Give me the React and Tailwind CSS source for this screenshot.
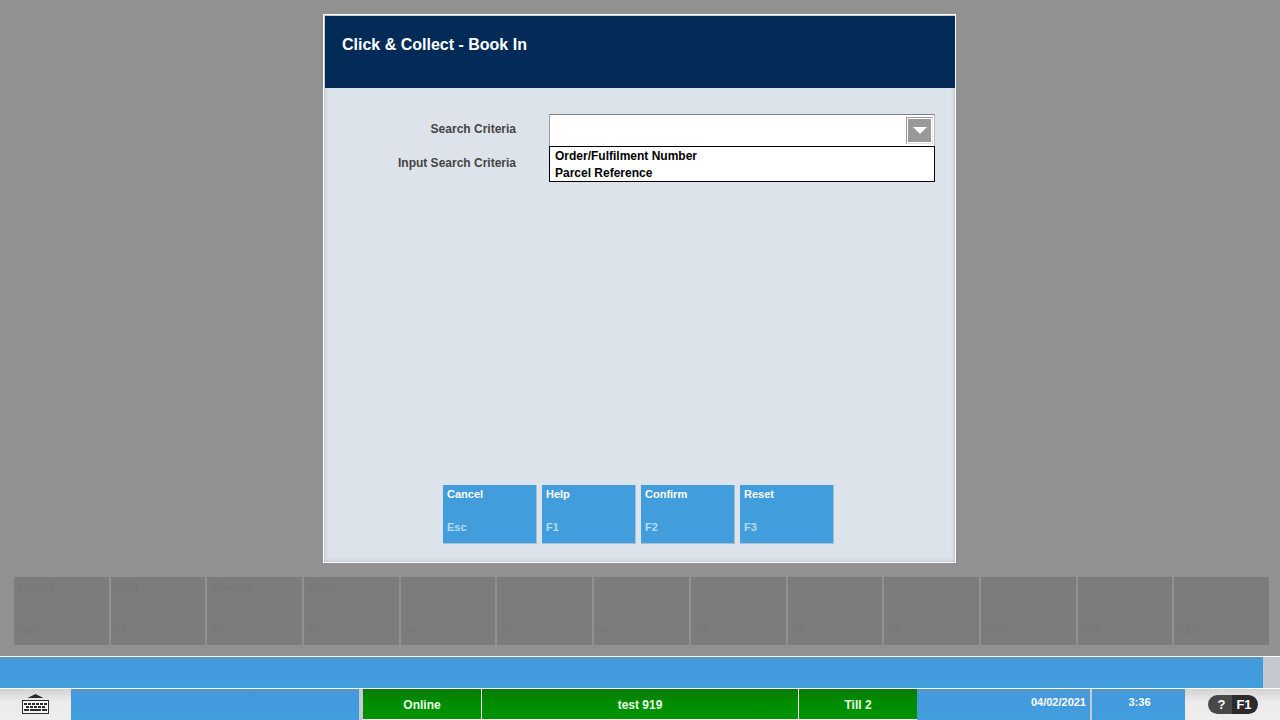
import React from "react";

const actions = [
  { name: "Cancel", hotkey: "Esc" },
  { name: "Help", hotkey: "F1" },
  { name: "Confirm", hotkey: "F2" },
  { name: "Reset", hotkey: "F3" },
];

const backgroundKeys = [
  ...actions,
  ...["F4", "F5", "F6", "F7", "F8", "F9", "F10", "F11", "F12"].map((hotkey) => ({ name: "", hotkey })),
];

const criteria = ["Order/Fulfilment Number", "Parcel Reference"];

function KeyboardIcon() {
  return (
    <svg width="27" height="20" viewBox="0 0 27 20" fill="#2b2b2b" aria-hidden="true">
      <path d="M5.5 4 L13.5 0 L21.5 4 Z" />
      <rect x="0.5" y="6.5" width="26" height="13" fill="#f6f6f6" stroke="#2b2b2b" />
      <path d="M2 9h3v2h-3z M6 9h3v2h-3z M10 9h3v2h-3z M14 9h3v2h-3z M18 9h3v2h-3z M22 9h3v2h-3z" />
      <path d="M4 12h3v2h-3z M8 12h3v2h-3z M12 12h3v2h-3z M16 12h3v2h-3z M20 12h3v2h-3z" />
      <path d="M2 15h5v2h-5z M8 15h11v2h-11z M20 15h5v2h-5z" />
    </svg>
  );
}

function SearchDialog() {
  return (
    <section
      role="dialog"
      aria-labelledby="dialog-title"
      className="mx-auto flex w-full max-w-[633px] flex-1 flex-col border border-white bg-[#dce3ea] shadow-[inset_0_0_4px_#aab2ba]"
    >
      <header className="ml-px mt-px h-[72px] bg-[#022b57] px-[17px] pt-[18px]">
        <h1 id="dialog-title" className="text-base leading-[22px] font-bold text-white">
          Click &amp; Collect - Book In
        </h1>
      </header>
      <form
        className="flex flex-1 flex-col justify-between pt-[26px] pb-[18px]"
        onSubmit={(e) => e.preventDefault()}
      >
        <div className="grid grid-cols-[192px_1fr] items-center gap-x-[33px] gap-y-px pr-[20px] text-xs font-bold">
          <label htmlFor="criteria" className="pb-[3px] text-right text-[#444444]">
            Search Criteria
          </label>
          <div className="relative">
            <select
              id="criteria"
              defaultValue=""
              className="block h-[33px] w-full appearance-none border border-t-[#808080] border-r-[#b8bcc0] border-b-white border-l-[#a0a0a0] bg-white px-[5px] text-black"
            >
              <option value=""></option>
              {criteria.map((c) => (
                <option key={c}>{c}</option>
              ))}
            </select>
            <span className="pointer-events-none absolute top-[3px] right-[2px] flex h-[27px] w-[27px] border border-t-[#999] border-r-[#e4e4e4] border-b-[#e4e4e4] border-l-[#999] bg-white p-px">
              <span className="flex flex-1 items-center justify-center bg-[#999999]">
                <svg width="14" height="7" viewBox="0 0 14 7" fill="#fff" aria-hidden="true">
                  <path d="M0 0h14L7 7z" />
                </svg>
              </span>
            </span>
            <ul
              role="listbox"
              aria-label="Search Criteria"
              className="absolute inset-x-0 top-[32px] z-10 h-9 border border-black bg-white px-[5px] pt-px text-black"
            >
              {criteria.map((c) => (
                <li key={c} role="option" aria-selected="false" className="leading-[17px]">
                  {c}
                </li>
              ))}
            </ul>
          </div>
          <label htmlFor="term" className="pb-[3px] text-right text-[#444444]">
            Input Search Criteria
          </label>
          <input id="term" type="text" className="h-[33px] w-full border border-[#a0a0a0] bg-white px-[5px]" />
        </div>
        <div className="flex justify-center gap-[5px] pr-[2px]">
          {actions.map((a) => (
            <button
              key={a.name}
              type="button"
              className="flex h-[59px] w-[94px] flex-col items-start gap-[17px] border-r border-b border-[#a3bfda] bg-[#419ddc] px-1 pt-px text-[11px] leading-4 font-bold text-white"
            >
              <span>{a.name}</span>
              <span className="text-[#b5dcf5]">{a.hotkey}</span>
            </button>
          ))}
        </div>
      </form>
    </section>
  );
}

function FunctionKeys() {
  return (
    <nav
      aria-label="Function keys"
      className="mt-[14px] mr-[11px] mb-[11px] ml-[14px] grid grid-cols-13 gap-[2px]"
    >
      {backgroundKeys.map((k) => (
        <button
          key={k.hotkey}
          type="button"
          disabled
          className="flex h-[68px] flex-col items-start justify-between bg-[#7c7c7c] px-1 pt-[2px] pb-[7px] text-[11px] leading-4 font-bold text-[#787878]"
        >
          <span>{k.name}</span>
          <span>{k.hotkey}</span>
        </button>
      ))}
    </nav>
  );
}

function StatusBar() {
  const green =
    "flex items-center justify-center border-b border-white bg-linear-to-b from-[#087a08] via-[#018b01] via-40% to-[#019301] pt-[2px] text-[#e6ffe6]";
  const blue = "bg-linear-to-b from-[#5099c9] via-[#4399de] via-20% to-[#419ddc]";
  return (
    <footer className="flex h-8 border-t border-white bg-[#c6cad2] text-xs font-bold text-white">
      <button
        type="button"
        aria-label="On-screen keyboard"
        className="flex w-[71px] items-center justify-center bg-linear-to-b from-[#d2d2d2] via-[#ebebeb] via-40% to-[#eeeeee] pb-px"
      >
        <KeyboardIcon />
      </button>
      <div className={blue + " mr-1 flex-[288]"} />
      <div className={green + " w-[118px]"}>Online</div>
      <div className={green + " ml-px flex-[316] shadow-[-1px_0_#fff,1px_0_#fff]"}>test 919</div>
      <div className={green + " ml-px w-[118px]"}>Till 2</div>
      <div className={blue + " w-[173px] pt-[5px] pr-1 text-right text-[11px] leading-4"}>04/02/2021</div>
      <div className={blue + " ml-[2px] w-[93px] pt-[5px] pl-[2px] text-center text-[11px] leading-4"}>3:36</div>
      <div className="flex w-[95px] items-center justify-center bg-linear-to-b from-[#d2d2d2] via-[#ebebeb] via-40% to-[#eeeeee]">
        <button
          type="button"
          className="flex h-[19px] w-[50px] overflow-hidden rounded-full text-[13px] leading-5"
        >
          <span className="flex-1 bg-[#484848] pl-1">?</span>
          <span className="w-[26px] bg-[#2b2b2b] pr-px">F1</span>
        </button>
      </div>
    </footer>
  );
}

export default function App() {
  return (
    <div className="flex min-h-screen flex-col bg-[#919191] font-['Liberation_Sans',Arial,sans-serif]">
      <main className="flex flex-1 flex-col pt-[14px]">
        <div className="flex flex-1 pr-px">
          <SearchDialog />
        </div>
        <FunctionKeys />
      </main>
      <div role="status" className="flex h-8 border-t border-white bg-[#c4c8ce]">
        <div className="flex-1 bg-linear-to-b from-[#5099c9] via-[#4399de] via-20% to-[#419ddc]" />
        <div className="w-[17px]" />
      </div>
      <StatusBar />
    </div>
  );
}
